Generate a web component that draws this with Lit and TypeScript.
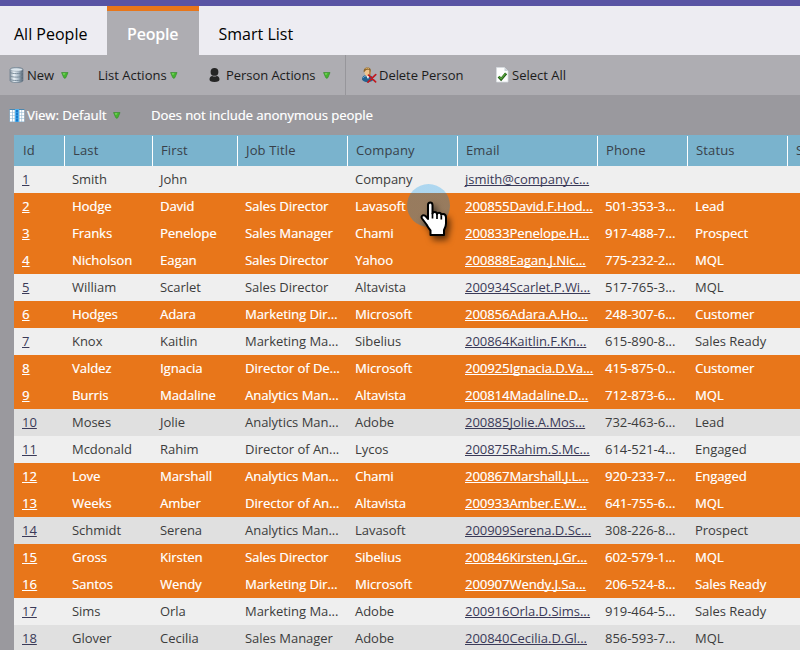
import { LitElement, html, svg, css } from "lit";
import { customElement } from "lit/decorators.js";
import { classMap } from "lit/directives/class-map.js";

const HEADERS = ["Id", "Last", "First", "Job Title", "Company", "Email", "Phone", "Status", "S"];

interface Row {
  selected: boolean;
  cells: string[];
}

const row = (selected: boolean, ...cells: string[]): Row => ({ selected, cells });

const ROWS: Row[] = [
  row(false, "1", "Smith", "John", "", "Company", "jsmith@company.c...", "", ""),
  row(true, "2", "Hodge", "David", "Sales Director", "Lavasoft", "200855David.F.Hod...", "501-353-3...", "Lead"),
  row(true, "3", "Franks", "Penelope", "Sales Manager", "Chami", "200833Penelope.H...", "917-488-7...", "Prospect"),
  row(true, "4", "Nicholson", "Eagan", "Sales Director", "Yahoo", "200888Eagan.J.Nic...", "775-232-2...", "MQL"),
  row(false, "5", "William", "Scarlet", "Sales Director", "Altavista", "200934Scarlet.P.Wi...", "517-765-3...", "MQL"),
  row(true, "6", "Hodges", "Adara", "Marketing Dir...", "Microsoft", "200856Adara.A.Ho...", "248-307-6...", "Customer"),
  row(false, "7", "Knox", "Kaitlin", "Marketing Ma...", "Sibelius", "200864Kaitlin.F.Kn...", "615-890-8...", "Sales Ready"),
  row(true, "8", "Valdez", "Ignacia", "Director of De...", "Microsoft", "200925Ignacia.D.Va...", "415-875-0...", "Customer"),
  row(true, "9", "Burris", "Madaline", "Analytics Man...", "Altavista", "200814Madaline.D...", "712-873-6...", "MQL"),
  row(false, "10", "Moses", "Jolie", "Analytics Man...", "Adobe", "200885Jolie.A.Mos...", "732-463-6...", "Lead"),
  row(false, "11", "Mcdonald", "Rahim", "Director of An...", "Lycos", "200875Rahim.S.Mc...", "614-521-4...", "Engaged"),
  row(true, "12", "Love", "Marshall", "Analytics Man...", "Chami", "200867Marshall.J.L...", "920-233-7...", "Engaged"),
  row(true, "13", "Weeks", "Amber", "Director of An...", "Altavista", "200933Amber.E.W...", "641-755-6...", "MQL"),
  row(false, "14", "Schmidt", "Serena", "Analytics Man...", "Lavasoft", "200909Serena.D.Sc...", "308-226-8...", "Prospect"),
  row(true, "15", "Gross", "Kirsten", "Sales Director", "Sibelius", "200846Kirsten.J.Gr...", "602-579-1...", "MQL"),
  row(true, "16", "Santos", "Wendy", "Marketing Dir...", "Microsoft", "200907Wendy.J.Sa...", "206-524-8...", "Sales Ready"),
  row(false, "17", "Sims", "Orla", "Marketing Ma...", "Adobe", "200916Orla.D.Sims...", "919-464-5...", "Sales Ready"),
  row(false, "18", "Glover", "Cecilia", "Sales Manager", "Adobe", "200840Cecilia.D.Gl...", "856-593-7...", "MQL"),
];

const databaseIcon = html`<svg class="icon" width="15" height="16" viewBox="0 0 15 16">
  <defs>
    <linearGradient id="db" x1="0" x2="1">
      <stop offset="0" stop-color="#8796a3" /><stop offset=".3" stop-color="#eef5fa" />
      <stop offset=".65" stop-color="#a9b9c6" /><stop offset="1" stop-color="#4c5c6a" />
    </linearGradient>
  </defs>
  <path d="M1 2.600C1 1.300 4 .5 7.500.5s6.500.8 6.500 2.100v10.800c0 1.300-3 2.100-6.500 2.100S1 14.700 1 13.400z" fill="url(#db)" stroke="#6d7f8e" stroke-width=".8" />
  <path d="M1.300 5.500c2 1.500 10.400 1.500 12.400 0M1.300 9c2 1.500 10.400 1.500 12.400 0M1.300 12.400c2 1.500 10.400 1.500 12.400 0" fill="none" stroke="#728594" stroke-width=".9" />
  <ellipse cx="7.500" cy="2.600" rx="6" ry="1.700" fill="#dce6ed" stroke="#8b9ba8" stroke-width=".6" />
</svg>`;

const arrowIcon = html`<svg class="arrow" width="8" height="7" viewBox="0 0 8 7">
  <path d="M.6.6h6.400L4.800 5.700Q3.800 6.900 2.800 5.700z" fill="#45b52f" stroke="#3d8f33" stroke-width=".8" />
  <path d="M1.600 1.300h3L2.900 3.200z" fill="#7ad85c" />
</svg>`;

const personIcon = html`<svg class="icon" width="12" height="14" viewBox="0 0 12 14">
  <circle cx="5.500" cy="3.900" r="3.900" fill="#252525" />
  <path d="M.5 11.200C.5 9.300 1.700 8.100 3.200 8q2.300 1 4.600 0c1.500.1 2.700 1.300 2.700 3.200 0 1.900-1.500 2.700-5 2.700s-5-.8-5-2.700z" fill="#252525" />
</svg>`;

const deleteIcon = html`<svg class="icon" width="16" height="16" viewBox="0 0 16 16">
  <path d="M1 12.500C1 9.500 2.700 8.500 5 8.300l4 .2c2.200.5 3.200 2 3.200 4.500-2 2.700-9 3.400-11.200-.5z" fill="#24618f" />
  <path d="M2 11q.8-1.800 3-2" fill="none" stroke="#65a7d1" stroke-width="1" />
  <path d="M5 8.300L7 12l1.800-3.700z" fill="#fff" />
  <ellipse cx="6.600" cy="5.200" rx="3" ry="4" fill="#efc38c" />
  <path d="M2.800 5.500C2.200 2 4 .4 6.300.4c2.700 0 4.300 1.800 3.400 5.100-.4-1.800-1-2.600-2.100-2.800-1.800 0-3 .3-3.400 1.300z" fill="#8d6429" />
  <path d="M9.600 3v4.500l-1.400 1.300V3z" fill="#a8793a" />
  <path d="M4.500 1.600q2-1 3.600 0" fill="none" stroke="#d6ad66" stroke-width="1" />
  <path d="M7.600 8.200l7 6.600M14.700 7.700L7 15.200" fill="none" stroke="#c2191f" stroke-width="1.700" stroke-linecap="round" />
</svg>`;

const checkIcon = html`<svg class="icon" width="13" height="16" viewBox="0 0 13 16">
  <path d="M.5.500h8l3.500 3.500v11H.5z" fill="#fdfdfd" stroke="#d5dbe0" stroke-width=".8" />
  <path d="M8.500.500V4H12z" fill="#c9d1d8" />
  <path d="M2.600 9.600l2.500 2.700 5-6" fill="none" stroke="#225c17" stroke-width="2.700" />
  <path d="M3.100 9.600l2 2.200 4.500-5.400" fill="none" stroke="#58a63c" stroke-width="1.200" />
</svg>`;

const columnsIcon = html`<svg class="icon" width="16" height="13" viewBox="0 0 16 13">
  <path d="M.5 0h15v13H.5z" fill="#8db4d0" />
  <path d="M.5 0h15v1H.5z" fill="#4f86ac" />
  <path d="M6 0h4v13H6z" fill="#4db1f0" />
  ${[0, 1, 2, 3].map((i) => {
    const y = 1 + i * 3;
    return svg`<path d="M1 ${y}h2v2.400H1zM3.600 ${y}h2v2.400h-2zM10.500 ${y}h2v2.400h-2zM13.100 ${y}h2v2.400h-2z" fill="#fff" />
      <path d="M7 ${y}h2v2.400H7z" fill="#1a78c8" />`;
  })}
</svg>`;

const handIcon = html`<svg class="hand" width="30" height="38" viewBox="0 0 30 38">
  <path d="M8 4Q8 1.500 10.200 1.500T12.500 4v8.500q.5-1.500 2.200-1.500 2 0 2.300 2 .5-1.200 2-1.200 2 0 2.300 2 .5-.8 1.800-.8 2.900 0 2.900 3.500v6q0 3-2 6.500v5H10.500v-4.500Q8 26.500 6.500 23.500L2 17.500Q.9 15.500 2.500 14.500q2-.8 3.500 1l2 2.500z" fill="#fff" stroke="#000" stroke-width="2" stroke-linejoin="round" />
  <path d="M12.500 12v5.500M17 13v5M21.300 14.500v4" fill="none" stroke="#000" stroke-width="1.700" />
</svg>`;

@customElement("app-root")
class AppRoot extends LitElement {
  static styles = css`
    :host {
      display: block;
      position: relative;
      width: 800px;
      height: 650px;
      overflow: hidden;
      background: #9a999e;
      font: 13px/18px "Open Sans", sans-serif;
      color: #1c1c1c;
      white-space: nowrap;
    }
    svg { display: block; flex: none; }
    .brand { height: 6px; background: #5954a4; }
    .tabs { display: flex; height: 49px; background: #edecf2; }
    .tab {
      box-sizing: border-box;
      height: 49px;
      padding: 5px 0 0 14px;
      border-top: 0 solid #e8761a;
      font-size: 16px;
      line-height: 46px;
      color: #000;
    }
    .all { width: 107px; }
    .current {
      width: 92px;
      padding: 0 0 0 20px;
      border-top-width: 5px;
      background: #aeadb2;
      color: #fff;
      font-weight: 600;
      letter-spacing: -0.2px;
    }
    .smart { padding-left: 19.5px; }
    .toolbar { display: flex; align-items: center; height: 40px; background: #aeadb2; }
    .item { display: flex; align-items: center; box-sizing: border-box; height: 40px; }
    .new { width: 98px; padding-left: 9px; }
    .new .label { width: 34px; margin-left: 3px; }
    .list { width: 111px; }
    .list .label { width: 72px; }
    .person { width: 136px; }
    .person .label { width: 97px; margin-left: 5px; letter-spacing: -0.05px; }
    .delete { width: 151px; padding-left: 15px; border-left: 1px solid #97969b; }
    .delete .label { margin-left: 2px; letter-spacing: -0.05px; }
    .select .label { margin-left: 3px; }
    .viewbar { display: flex; align-items: center; height: 40px; color: #fff; text-shadow: 0.4px 0 rgba(255, 255, 255, 0.55); }
    .view { display: flex; align-items: center; width: 151px; box-sizing: border-box; padding-left: 9px; }
    .view .label { width: 86px; margin-left: 2px; }
    .grid { margin-left: 14px; width: 900px; }
    .line { display: grid; grid-template-columns: 51px 88px 85px 110px 110px 140px 90px 100px 126px; }
    .head { height: 31px; background: #7ab3cd; color: #38414a; letter-spacing: 0.15px; }
    .th { margin-top: 1px; padding-left: 9px; line-height: 29px; border-right: 1px solid #fff; }
    .th:not(:first-child) { padding-left: 8px; }
    .row { height: 27px; line-height: 27px; background: #e0e0e0; color: #3c3c3c; }
    .row.odd { background: #efefef; }
    .row.selected { background: #e8761a; color: #fff; text-shadow: 0.4px 0 rgba(255, 255, 255, 0.55); }
    .cell { padding-left: 7px; letter-spacing: -0.03px; }
    .cell:first-child { padding-left: 8px; }
    .link { color: #3a3a58; text-decoration: underline 1px; text-underline-offset: 1px; text-decoration-skip-ink: none; }
    .selected .link { color: #fff; }
    .halo {
      position: absolute;
      left: 407px;
      top: 184px;
      width: 43px;
      height: 43px;
      border-radius: 50%;
      background: linear-gradient(rgba(142, 203, 240, 0.68) 9px, rgba(110, 126, 130, 0.66) 9px);
    }
    .hand { position: absolute; left: 420px; top: 201px; filter: drop-shadow(3px 4px 3px rgba(0, 0, 0, 0.6)); }
  `;

  private renderRow(r: Row, index: number) {
    return html`<div class=${classMap({ line: true, row: true, odd: index % 2 === 0, selected: r.selected })}>
      ${r.cells.map(
        (text, i) => html`<div class="cell">${i === 0 || i === 5 ? html`<span class="link">${text}</span>` : text}</div>`,
      )}
    </div>`;
  }

  render() {
    return html`
      <div class="brand"></div>
      <div class="tabs">
        <div class="tab all"><span>All People</span></div>
        <div class="tab current"><span>People</span></div>
        <div class="tab smart"><span>Smart List</span></div>
      </div>
      <div class="toolbar">
        <div class="item new">${databaseIcon}<span class="label">New</span>${arrowIcon}</div>
        <div class="item list"><span class="label">List Actions</span>${arrowIcon}</div>
        <div class="item person">${personIcon}<span class="label">Person Actions</span>${arrowIcon}</div>
        <div class="item delete">${deleteIcon}<span class="label">Delete Person</span></div>
        <div class="item select">${checkIcon}<span class="label">Select All</span></div>
      </div>
      <div class="viewbar">
        <div class="view">${columnsIcon}<span class="label">View: Default</span>${arrowIcon}</div>
        <span>Does not include anonymous people</span>
      </div>
      <div class="grid">
        <div class="line head">${HEADERS.map((h) => html`<div class="th">${h}</div>`)}</div>
        ${ROWS.map((r, i) => this.renderRow(r, i))}
      </div>
      <div class="halo"></div>
      ${handIcon}
    `;
  }
}
